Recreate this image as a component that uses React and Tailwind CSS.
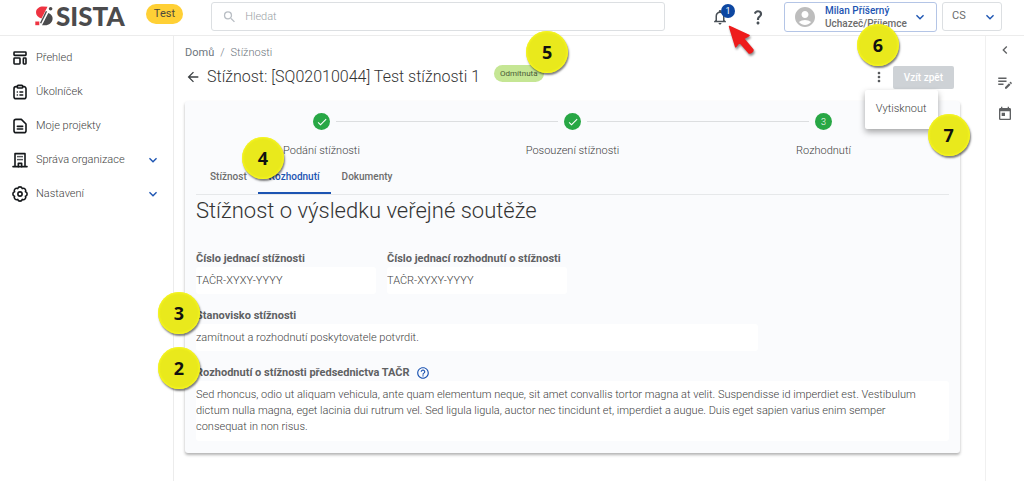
import React from 'react';
import {
  MdAccountCircle,
  MdArrowBack,
  MdCheck,
  MdChevronLeft,
  MdEditNote,
  MdHelpOutline,
  MdKeyboardArrowDown,
  MdMoreVert,
  MdNotificationsNone,
  MdQuestionMark,
  MdSearch,
  MdToday,
} from 'react-icons/md';

const NavSvg = ({ children }) => (
  <svg
    viewBox="0 0 24 24"
    className="h-4 w-4 shrink-0"
    fill="none"
    stroke="#15181b"
    strokeWidth="2.4"
    strokeLinecap="round"
    strokeLinejoin="round"
    aria-hidden="true"
  >
    {children}
  </svg>
);

const OverviewIcon = () => (
  <NavSvg>
    <rect x="3" y="3" width="18" height="5" rx="1" />
    <rect x="3" y="12" width="9" height="9" rx="1" />
    <rect x="17" y="12" width="4" height="9" rx="1" />
  </NavSvg>
);

const TasksIcon = () => (
  <NavSvg>
    <path d="M8 4H6a3 3 0 0 0-3 3v12a3 3 0 0 0 3 3h12a3 3 0 0 0 3-3V7a3 3 0 0 0-3-3h-2" />
    <rect x="8" y="2" width="8" height="4" rx="1.2" />
    <path d="M8 12h.01M12 12h4M8 16.5h.01M12 16.5h4" />
  </NavSvg>
);

const ProjectsIcon = () => (
  <NavSvg>
    <path d="M14 2H6a3 3 0 0 0-3 3v14a3 3 0 0 0 3 3h12a3 3 0 0 0 3-3V9z" />
    <path d="M8 12.5h8M8 16.5h8" />
  </NavSvg>
);

const OrganizationIcon = () => (
  <NavSvg>
    <path d="M1.5 22h21M4.5 22V2.5h15V22" />
    <path d="M9.5 22v-5h5v5" />
    <path d="M9 7h.01M12 7h.01M15 7h.01M9 11.5h.01M12 11.5h.01M15 11.5h.01" />
  </NavSvg>
);

const SettingsIcon = () => (
  <NavSvg>
    <path d="M8.63 3.87A3.5 3.5 0 0 1 15.37 3.87 3.5 3.5 0 0 1 20.13 8.63 3.5 3.5 0 0 1 20.13 15.37 3.5 3.5 0 0 1 15.37 20.13 3.5 3.5 0 0 1 8.63 20.13 3.5 3.5 0 0 1 3.87 15.37 3.5 3.5 0 0 1 3.87 8.63 3.5 3.5 0 0 1 8.63 3.87z" />
    <circle cx="12" cy="12" r="3.2" />
  </NavSvg>
);

const navItems = [
  { label: 'Přehled', icon: OverviewIcon },
  { label: 'Úkolníček', icon: TasksIcon },
  { label: 'Moje projekty', icon: ProjectsIcon },
  { label: 'Správa organizace', icon: OrganizationIcon, expandable: true },
  { label: 'Nastavení', icon: SettingsIcon, expandable: true },
];

const steps = [
  { label: 'Podání stížnosti', done: true },
  { label: 'Posouzení stížnosti', done: true },
  { label: 'Rozhodnutí', done: false },
];

const tabs = ['Stížnost', 'Rozhodnutí', 'Dokumenty'];

const Marker = ({ number, className }) => (
  <span
    className={`pointer-events-none absolute z-20 flex h-[42px] w-[42px] items-center justify-center rounded-full bg-[#e9e91c] font-['Open_Sans',sans-serif] text-lg font-bold text-[#111] shadow-[1px_2px_2px_rgba(0,0,0,0.5),inset_0_0_2px_1px_#f8f822] ${className}`}
  >
    {number}
  </span>
);

const Logo = () => (
  <a href="#" aria-label="SISTA" className="mb-1 flex items-center gap-px">
    <svg viewBox="0 0 20 20" className="h-5 w-5" aria-hidden="true">
      <path d="M12.5.8 6.5 12.6C3 11.2.8 9 1 5.9 1.3 2.5 4.5.6 8 .6z" fill="#ee3341" />
      <path d="M.3 15.5h4v3.7h-4z" fill="#ee3341" />
      <path d="M13.3 7c3 1.2 4.6 3.2 4.3 6-.3 3.7-3.6 6.3-7.5 6.3H7z" fill="#4b4b4d" />
      <path d="M11.5 5.2 5.6 17.3" stroke="#4b4b4d" strokeWidth="1.4" />
      <circle cx="15.6" cy="2.8" r="1.8" fill="#4b4b4d" />
    </svg>
    <span className="font-[Lato,sans-serif] text-[26px] leading-8 font-black text-[#4b4b4d]">SISTA</span>
  </a>
);

const Header = () => (
  <header className="flex h-9 items-center border-b border-[#ececec]">
    <div className="flex w-[211px] shrink-0 items-center justify-between pr-7 pl-[35px]">
      <Logo />
      <span className="mb-2 rounded-full bg-[#ffd035] px-2 text-[11px] leading-5 text-[#4c4a3c]">Test</span>
    </div>
    <div className="mb-0.5 flex h-[29px] flex-1 items-center gap-2 rounded-[3px] border border-[#dcdfe2] px-2.5">
      <MdSearch className="h-4 w-4 text-[#b9bec4]" />
      <input
        type="search"
        aria-label="Hledat"
        placeholder="Hledat"
        className="h-5 w-full bg-transparent text-[11px] font-light outline-none placeholder:text-[#9a9fa5]"
      />
    </div>
    <div className="mb-0.5 ml-[46px] flex items-center gap-5">
      <button type="button" aria-label="Oznámení" className="relative">
        <MdNotificationsNone className="h-[18px] w-[18px] text-[#495057]" />
        <span className="absolute -top-1 left-2.5 flex h-3.5 w-3.5 items-center justify-center rounded-full bg-[#0d47a1] text-[9px] leading-3 text-white">
          1
        </span>
        <svg
          viewBox="0 0 28 32"
          className="pointer-events-none absolute top-[17px] left-[17px] z-20 h-8 w-7 drop-shadow-[1px_2px_1px_rgba(0,0,0,0.45)]"
          aria-hidden="true"
        >
          <path
            d="M1.5 1.5 21 10.5l-5.3 3.2 9 10.7c1 1.7-2.4 4.6-4 3.2l-9.2-10.5-3.8 4.7z"
            fill="#ee1c1c"
            stroke="#ee1c1c"
            strokeWidth="1.5"
            strokeLinejoin="round"
          />
        </svg>
      </button>
      <button type="button" aria-label="Nápověda">
        <MdQuestionMark className="h-[18px] w-[18px] text-[#495057]" />
      </button>
    </div>
    <div className="relative mb-0.5 ml-[17px]">
      <button
        type="button"
        className="flex h-[30px] w-[153px] items-center rounded-[3px] border border-[#b4c5e6] pr-2 pl-2 text-left"
      >
        <MdAccountCircle className="h-6 w-6 shrink-0 text-[#bdbdbd]" />
        <span className="ml-2 flex-1 text-[10px] leading-[13px] font-medium">
          <span className="block text-[#1c54b2]">Milan Příšerný</span>
          <span className="block text-[#6c6c6c]">Uchazeč/Příjemce</span>
        </span>
        <MdKeyboardArrowDown className="h-4 w-4 shrink-0 text-[#1c54b2]" />
      </button>
      <Marker number="6" className="top-[22px] left-[73px]" />
    </div>
    <div className="relative mr-[22px] mb-0.5 ml-[5px] flex items-center">
      <select
        aria-label="Jazyk"
        defaultValue="CS"
        className="h-[29px] w-[60px] appearance-none rounded-[3px] border border-[#dcdfe2] bg-white pl-[9px] text-[11px] text-[#6c6c6c]"
      >
        <option>CS</option>
        <option>EN</option>
      </select>
      <MdKeyboardArrowDown className="pointer-events-none absolute right-1 h-4 w-4 text-[#1c54b2]" />
    </div>
  </header>
);

const Sidebar = () => (
  <nav className="w-[174px] shrink-0 border-r border-[#ececec] pt-[5px]">
    {navItems.map(({ label, icon: Icon, expandable }) => (
      <a
        key={label}
        href="#"
        className="flex h-[34px] items-center gap-2 pr-3 pl-3 text-[11px] font-light text-[#3f3f3f]"
      >
        <Icon />
        <span className="flex-1">{label}</span>
        {expandable && <MdKeyboardArrowDown className="h-4 w-4 text-[#1c54b2]" />}
      </a>
    ))}
  </nav>
);

const RightRail = () => (
  <aside className="flex w-[39px] shrink-0 flex-col items-center gap-[15px] border-l border-[#f0f0f0] pt-1.5 text-[#5f6163]">
    <button type="button" aria-label="Rozbalit panel">
      <MdChevronLeft className="h-4 w-4" />
    </button>
    <button type="button" aria-label="Poznámky">
      <MdEditNote className="h-[18px] w-[18px]" />
    </button>
    <button type="button" aria-label="Kalendář">
      <MdToday className="h-4 w-4" />
    </button>
  </aside>
);

const Stepper = () => (
  <ol className="grid grid-cols-3">
    {steps.map((step, index) => (
      <li key={step.label} className="flex flex-col items-center">
        <div className="flex w-full items-center gap-1.5">
          <span className={index > 0 ? 'h-px flex-1 bg-[#dcdee0]' : 'h-px flex-1'} />
          <span className="flex h-[17px] w-[17px] items-center justify-center rounded-full bg-[#28a745] text-[9px] leading-3 font-light text-white">
            {step.done ? <MdCheck className="h-3 w-3" /> : index + 1}
          </span>
          <span className={index < steps.length - 1 ? 'h-px flex-1 bg-[#dcdee0]' : 'h-px flex-1'} />
        </div>
        <span className="mt-[13px] text-[11px] leading-4 font-light text-[#3f3f3f]">{step.label}</span>
      </li>
    ))}
  </ol>
);

const Tabs = () => (
  <div role="tablist" className="relative mt-1.5 flex border-b border-[#e6e8ea] pl-[3px]">
    {tabs.map((tab) => (
      <button
        key={tab}
        type="button"
        role="tab"
        aria-selected={tab === 'Rozhodnutí'}
        className={`h-[29px] border-b-2 px-[11px] pb-1 text-[10px] font-medium ${
          tab === 'Rozhodnutí' ? 'border-[#1c54b2] text-[#1c54b2]' : 'border-transparent text-[#6c6c6c]'
        }`}
      >
        {tab}
      </button>
    ))}
    <Marker number="4" className="-top-7 left-[46px]" />
  </div>
);

const labelClass = 'flex h-4 items-center gap-1.5 text-[11px] font-bold text-[#5f6163]';
const fieldClass = 'block w-full rounded-[3px] bg-white text-[11px] font-light text-[#3f3f3f] outline-none';

const DecisionForm = () => (
  <form className="mt-[26px] grid grid-cols-4 gap-x-[11px] gap-y-[14px]">
    <div>
      <label htmlFor="complaint-ref" className={labelClass}>
        Číslo jednací stížnosti
      </label>
      <input id="complaint-ref" readOnly value="TAČR-XYXY-YYYY" className={`h-[27px] ${fieldClass}`} />
    </div>
    <div>
      <label htmlFor="decision-ref" className={`whitespace-nowrap ${labelClass}`}>
        Číslo jednací rozhodnutí o stížnosti
      </label>
      <input id="decision-ref" readOnly value="TAČR-XYXY-YYYY" className={`h-[27px] ${fieldClass}`} />
    </div>
    <div className="relative col-span-3 col-start-1">
      <label htmlFor="statement" className={labelClass}>
        Stanovisko stížnosti
      </label>
      <input
        id="statement"
        readOnly
        value="zamítnout a rozhodnutí poskytovatele potvrdit."
        className={`h-[27px] ${fieldClass}`}
      />
      <Marker number="3" className="-top-4 -left-[38px]" />
    </div>
    <div className="relative col-span-4">
      <label htmlFor="board-decision" className={labelClass}>
        Rozhodnutí o stížnosti předsednictva TAČR
        <MdHelpOutline className="h-3.5 w-3.5 text-[#1c54b2]" />
      </label>
      <textarea
        id="board-decision"
        readOnly
        rows={3}
        value="Sed rhoncus, odio ut aliquam vehicula, ante quam elementum neque, sit amet convallis tortor magna at velit. Suspendisse id imperdiet est. Vestibulum dictum nulla magna, eget lacinia dui rutrum vel. Sed ligula ligula, auctor nec tincidunt et, imperdiet a augue. Duis eget sapien varius enim semper consequat in non risus."
        className={`resize-none overflow-hidden py-1.5 pr-4 leading-4 ${fieldClass}`}
      />
      <Marker number="2" className="-top-[18px] -left-[38px]" />
    </div>
  </form>
);

const PageHeading = () => (
  <>
    <nav aria-label="Drobečková navigace" className="flex h-4 items-center gap-1.5 text-[11px] text-[#6c757d]">
      <a href="#">Domů</a>
      <span className="font-light">/</span>
      <span className="font-light">Stížnosti</span>
    </nav>
    <div className="mt-[3px] flex h-[26px] items-center">
      <button type="button" aria-label="Zpět">
        <MdArrowBack className="h-4 w-4 text-[#3c4043]" />
      </button>
      <h1 className="ml-1.5 text-base font-light text-[#333]">Stížnost: [SQ02010044] Test stížnosti 1</h1>
      <span className="relative mb-2 ml-3.5 rounded-full bg-[#c5e694] px-1.5 text-[8px] leading-[17px] text-[#4a5a38]">
        Odmítnuta
        <Marker number="5" className="-top-[34px] left-8" />
      </span>
      <div className="relative ml-auto flex items-center">
        <button type="button" aria-label="Další akce">
          <MdMoreVert className="h-4 w-4 text-[#55585b]" />
        </button>
        <div
          role="menu"
          className="absolute top-[21px] -left-1.5 z-10 rounded-[2px] bg-white shadow-[0_3px_6px_rgba(0,0,0,0.35)]"
        >
          <button type="button" role="menuitem" className="h-[39px] px-[11px] text-[11px] font-light text-[#3f3f3f]">
            Vytisknout
          </button>
          <Marker number="7" className="top-6 left-[63px]" />
        </div>
      </div>
      <button
        type="button"
        disabled
        className="mr-1.5 ml-1.5 h-[23px] rounded-[2px] bg-[#ced2d6] px-[11px] text-[10px] font-medium text-white"
      >
        Vzít zpět
      </button>
    </div>
  </>
);

const App = () => (
  <div className="flex min-h-screen flex-col bg-white font-[Roboto,sans-serif] text-[#3f3f3f]">
    <Header />
    <div className="flex flex-1">
      <Sidebar />
      <main className="min-w-0 flex-1 px-[11px] pt-[9px] pr-[25px] pb-6">
        <PageHeading />
        <section className="mt-[11px] rounded-[3px] bg-[#fafbfd] px-[11px] pt-3 pb-3 shadow-[0_2px_3px_rgba(0,0,0,0.3)]">
          <Stepper />
          <Tabs />
          <h2 className="mt-0.5 text-[22px] leading-7 font-light text-[#333]">Stížnost o výsledku veřejné soutěže</h2>
          <DecisionForm />
        </section>
      </main>
      <RightRail />
    </div>
  </div>
);

export default App;
